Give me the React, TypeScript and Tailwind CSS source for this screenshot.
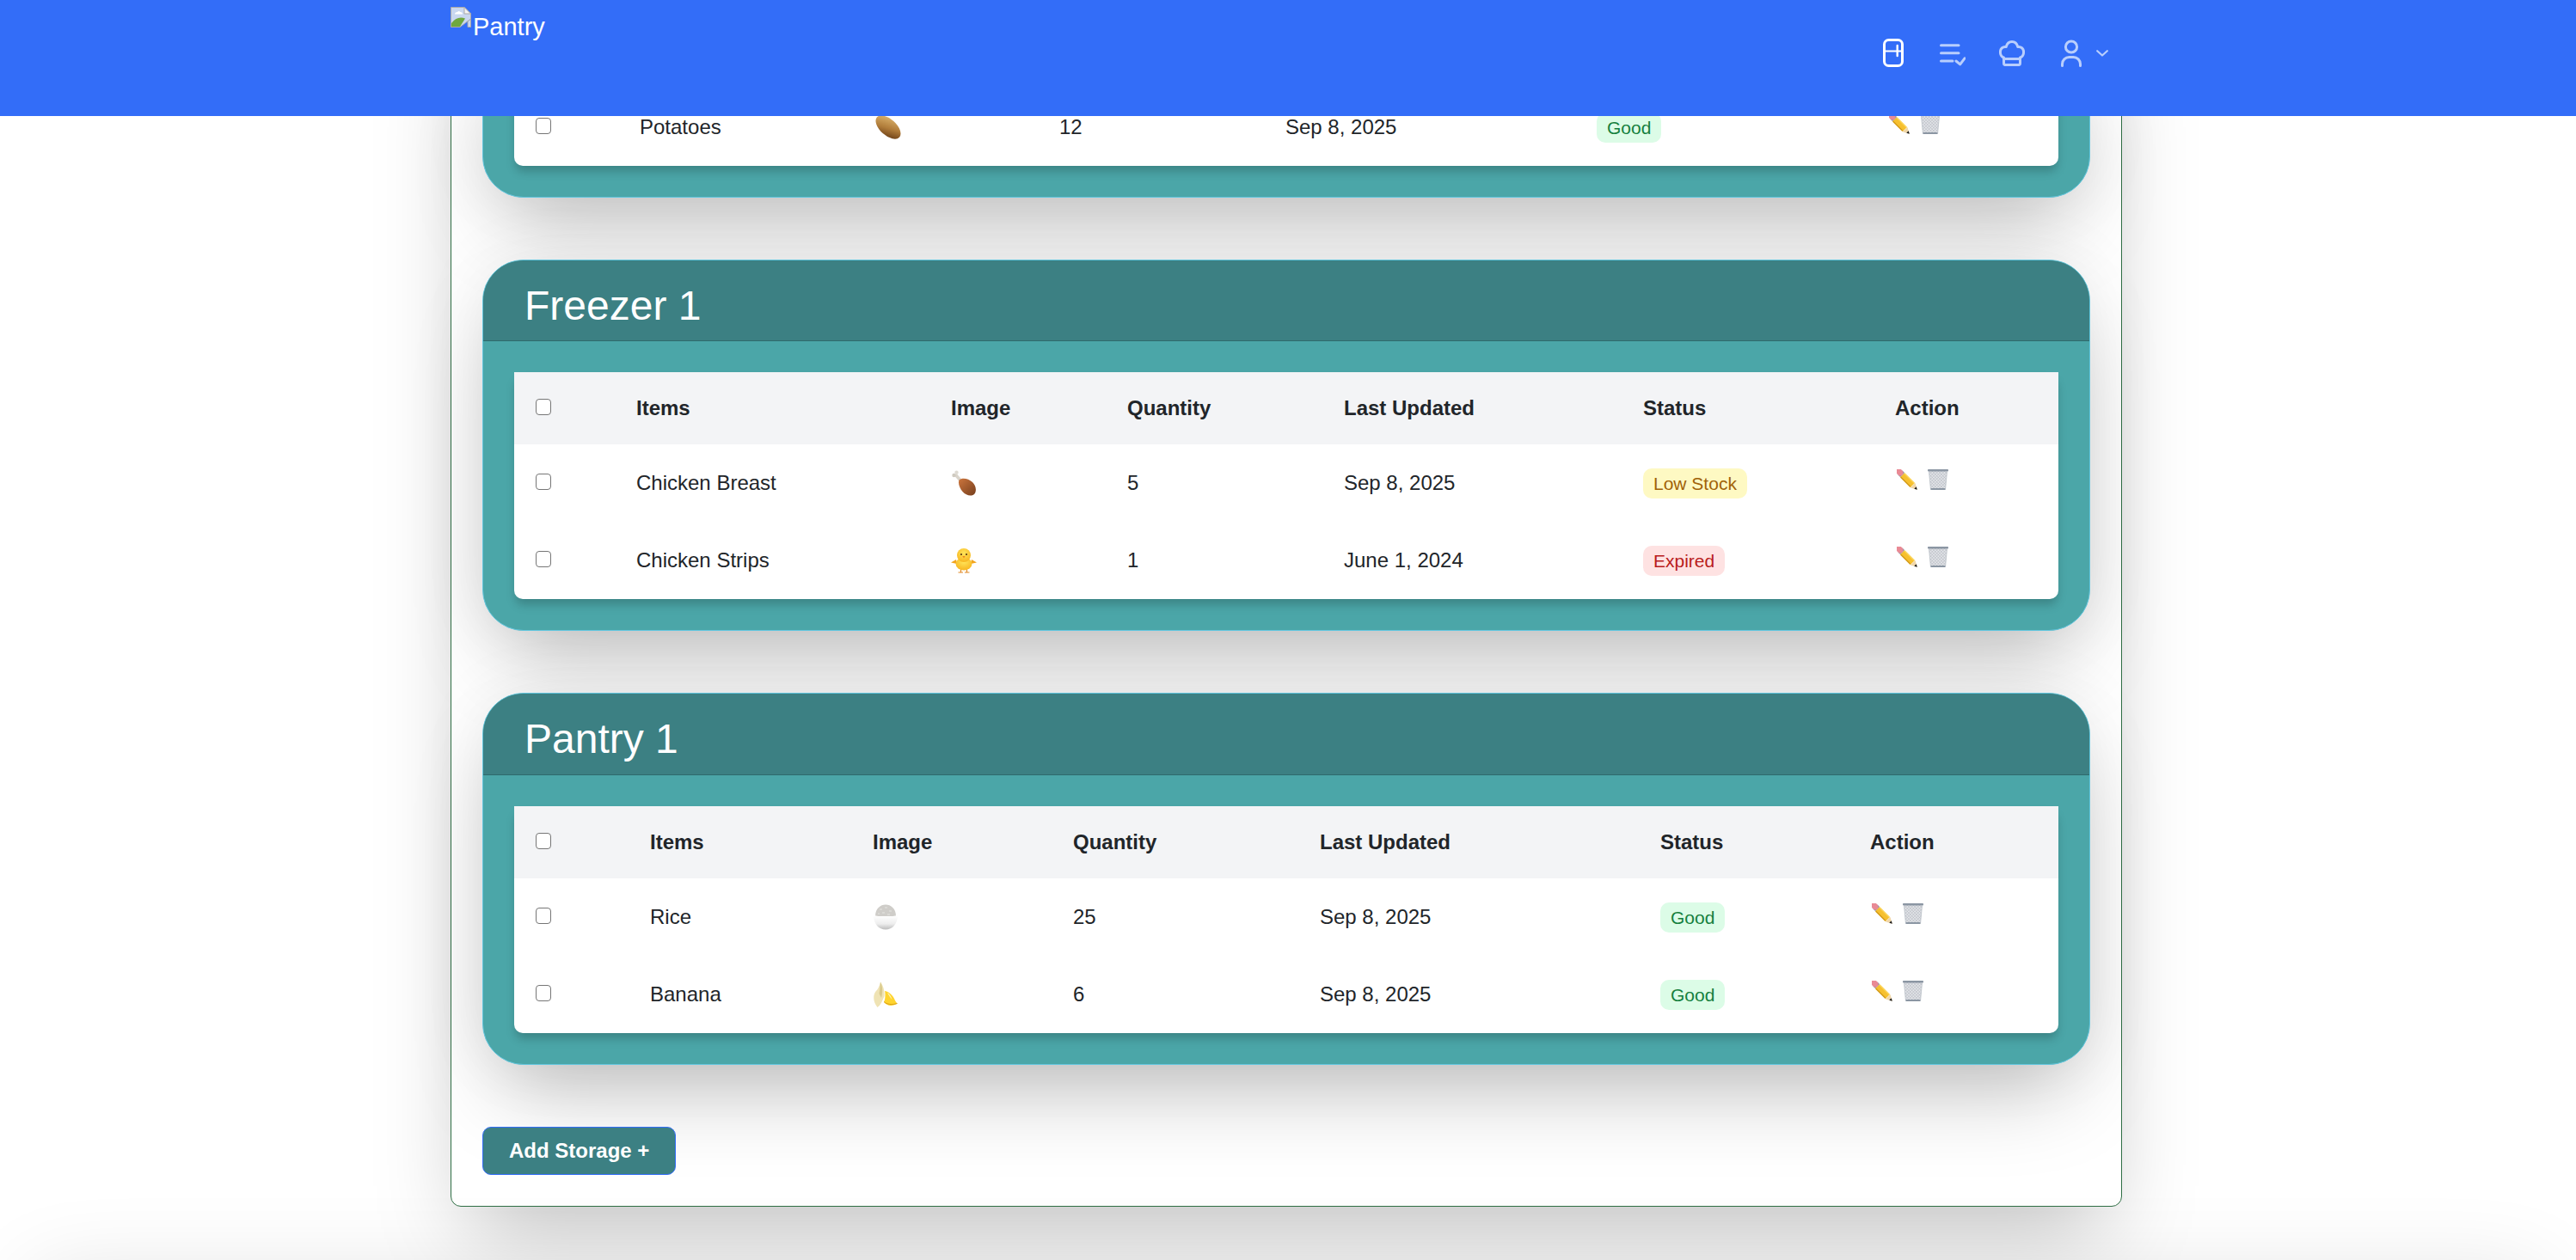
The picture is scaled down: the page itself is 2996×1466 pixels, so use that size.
const font = "font-['Liberation_Sans',Arial,sans-serif]"

function Fridge() {
  return (
    <svg width="24" height="33" viewBox="0 0 24 33" fill="none" stroke="white" strokeLinecap="round">
      <rect x="1.5" y="1.5" width="21" height="30" rx="5" strokeWidth="3" />
      <path d="M2 14.5H22" strokeWidth="2" />
      <path d="M16.7 8V20" strokeWidth="2.4" />
    </svg>
  )
}

function ListCheck() {
  return (
    <svg width="30" height="27" viewBox="0 0 30 27" fill="none" stroke="#b8cefd" strokeWidth="3" strokeLinecap="round" strokeLinejoin="round">
      <path d="M1.5 2.7H22" />
      <path d="M1.5 11.7H22" />
      <path d="M1.5 21H15" />
      <path d="M19 21L23.7 24.8L29 17.8" />
    </svg>
  )
}

function ChefHat() {
  return (
    <svg width="30" height="30" viewBox="0 0 30 30" fill="none" stroke="#b8cefd" strokeWidth="3" strokeLinejoin="round">
      <path d="M5.5 20C2.5 19 1.4 16 1.4 13.4C1.4 9.4 4.6 7 8.2 7.6C9.2 3.6 12 1.5 15 1.5C18 1.5 20.8 3.6 21.8 7.6C25.4 7 28.6 9.4 28.6 13.4C28.6 16 27.5 19 24.5 20V26.5Q24.5 28.6 22.4 28.6H7.6Q5.5 28.6 5.5 26.5Z" />
      <path d="M5.5 21.5H24.5" />
    </svg>
  )
}

function User() {
  return (
    <svg width="24" height="32" viewBox="0 0 24 32" fill="none" stroke="#b8cefd" strokeWidth="3" strokeLinecap="round">
      <circle cx="12" cy="8.5" r="6.6" />
      <path d="M1.5 30.5V28.500A8 8 0 0 1 9.500 20.500H14.500A8 8 0 0 1 22.500 28.500V30.500" />
    </svg>
  )
}

function Chevron() {
  return (
    <svg width="14" height="8" viewBox="0 0 14 8" fill="none" stroke="#b8cefd" strokeWidth="2.2" strokeLinecap="round" strokeLinejoin="round">
      <path d="M1.2 1.2L7 6.500L12.800 1.200" />
    </svg>
  )
}

function BrokenImage() {
  return (
    <svg width="24" height="24" viewBox="0 0 24 24" className="mt-[8px] shrink-0">
      <path d="M0.500 0.500H16L23.500 8V14L11 23.500H0.500Z" fill="#c9d7f0" stroke="#a9a9a9" />
      <path d="M16 0.500V8H23.500Z" fill="#f4f4f4" stroke="#a9a9a9" />
      <path d="M5 8.500Q5 6 8 6Q9.500 4 11.500 6Q14 6 14 8.500Z" fill="#ffffff" />
      <path d="M1 23V19Q8 10 17 13.500L11 23Z" fill="#6fa83f" />
      <path d="M20 17L23.500 14V23.500H20Z" fill="#c9d7f0" stroke="#a9a9a9" />
    </svg>
  )
}

function Potato() {
  return (
    <svg width="30" height="30" viewBox="0 0 30 30">
      <defs>
        <linearGradient id="potato" x1="0.15" y1="0.1" x2="0.85" y2="0.9">
          <stop offset="0" stopColor="#d9b06a" />
          <stop offset="0.55" stopColor="#b07c3a" />
          <stop offset="1" stopColor="#6f4218" />
        </linearGradient>
      </defs>
      <ellipse cx="15" cy="15" rx="17.500" ry="9.500" transform="rotate(42 15 15)" fill="url(#potato)" />
    </svg>
  )
}

function Drumstick() {
  return (
    <svg width="30" height="30" viewBox="0 0 30 30">
      <defs>
        <linearGradient id="meat" x1="0.1" y1="0.1" x2="0.9" y2="0.9">
          <stop offset="0" stopColor="#c4703a" />
          <stop offset="1" stopColor="#7f4420" />
        </linearGradient>
      </defs>
      <path d="M5 5L12 13" stroke="#d9d4cb" strokeWidth="3.500" />
      <circle cx="3.500" cy="6" r="2.200" fill="#cfcac0" />
      <circle cx="6.500" cy="2.800" r="2.200" fill="#dedad2" />
      <path d="M9.500 11.500C13 8.500 20 9.500 25 14C29.500 18.500 30 25 27 28C23.500 31 17.500 29.500 13.500 25C10 21 8 15 9.500 11.500Z" fill="url(#meat)" />
    </svg>
  )
}

function Chick() {
  return (
    <svg width="30" height="30" viewBox="0 0 30 30">
      <defs>
        <radialGradient id="chick" cx="0.5" cy="0.35" r="0.7">
          <stop offset="0" stopColor="#ffe55a" />
          <stop offset="1" stopColor="#f7b21c" />
        </radialGradient>
      </defs>
      <path d="M6 14L0 17.500L7 19Z" fill="#f2a51f" />
      <path d="M24 14L30 17.500L23 19Z" fill="#f2a51f" />
      <ellipse cx="15" cy="19" rx="9.500" ry="7.500" fill="url(#chick)" />
      <circle cx="15" cy="9" r="8" fill="url(#chick)" />
      <circle cx="12" cy="8" r="1" fill="#4a2c10" />
      <circle cx="18" cy="8" r="1" fill="#4a2c10" />
      <path d="M13.300 10H16.700L15 12.500Z" fill="#ee8a1a" />
      <path d="M11.500 26V28.500M18.500 26V28.500M8.500 29H14M16 29H21.500" stroke="#e28a25" strokeWidth="1.200" />
    </svg>
  )
}

function Rice() {
  return (
    <svg width="30" height="30" viewBox="0 0 30 30">
      <defs>
        <linearGradient id="bowl" x1="0" y1="0" x2="0" y2="1">
          <stop offset="0" stopColor="#ffffff" />
          <stop offset="0.6" stopColor="#eeeeee" />
          <stop offset="1" stopColor="#bcbcbc" />
        </linearGradient>
      </defs>
      <path d="M3 14C3 5 9 0.500 15 0.500C21 0.500 27 5 27 14Z" fill="#cfcdc9" />
      <path d="M8 6H11M14 4H17M19 8H22M11 10H14M6 11H8M17 12H20" stroke="#e6e5e1" strokeWidth="1.200" />
      <path d="M1 13Q15 16.500 29 13C29 23 23 29.500 15 29.500C7 29.500 1 23 1 13Z" fill="url(#bowl)" />
    </svg>
  )
}

function Banana() {
  return (
    <svg width="30" height="30" viewBox="0 0 30 30">
      <path d="M9 0.500C12.500 5 14 11 13.500 17C11 23 9 28 5.500 30C0.500 24 0 16 3.500 11.500C6.500 8.500 8 5 9 0.500Z" fill="#efe3b4" />
      <path d="M9 0.500C11.500 6 12 12 10 19L7.500 14C8.500 9 8.500 5 9 0.500Z" fill="#d9c98c" />
      <path d="M14 11C17 11 23 14.500 26 22C27 24 28 25 28.500 25.500C24 29 16 29 13 23.500C14.500 22 15 15 14 11Z" fill="#ffd42e" />
      <path d="M17 13C19.500 14 21.500 17 22.500 21C20 18.500 18.500 15.500 17 13Z" fill="#fff3b0" />
      <path d="M13 23.500C16 26.500 22 27.500 28.500 25.500" stroke="#d99d14" strokeWidth="1" fill="none" />
    </svg>
  )
}

function Pencil() {
  return (
    <svg width="24" height="24" viewBox="0 0 24 24">
      <path d="M6.500 6.500L18.500 18.500" stroke="#f6c02f" strokeWidth="6.500" />
      <path d="M9 4.800L20.500 16.300" stroke="#fbd55b" strokeWidth="1.500" />
      <path d="M4.500 9L16 20.500" stroke="#d49a17" strokeWidth="1.500" />
      <path d="M4 4L6.500 6.500" stroke="#7f8ea3" strokeWidth="7" />
      <path d="M1.800 1.800L4 4" stroke="#e98a95" strokeWidth="7" strokeLinecap="round" />
      <path d="M21.500 16L23.800 23.800L16 21.500Z" fill="#f0d6a8" />
      <path d="M22.700 20.300L23.800 23.800L20.300 22.700Z" fill="#1a1a1a" />
    </svg>
  )
}

function Trash() {
  return (
    <svg width="24" height="24" viewBox="0 0 24 24">
      <defs>
        <pattern id="mesh" width="2.500" height="2.500" patternUnits="userSpaceOnUse" patternTransform="rotate(45)">
          <rect width="2.500" height="2.500" fill="#e4e6ea" />
          <path d="M0 0H2.500M0 0V2.500" stroke="#a8adb5" strokeWidth="0.800" />
        </pattern>
      </defs>
      <path d="M1.500 2H22.500L20.500 24H3.500Z" fill="url(#mesh)" />
      <rect x="0" y="0" width="24" height="2.500" rx="0.800" fill="#8b96a3" />
      <path d="M3.200 22H20.800L20.500 24H3.500Z" fill="#8b96a3" />
      <path d="M1.500 2.500L3.500 24M22.500 2.500L20.500 24" stroke="#b9bfc7" strokeWidth="0.800" />
    </svg>
  )
}

const badgeStyles = {
  Good: 'bg-[#dcfce7] text-[#15803d]',
  'Low Stock': 'bg-[#fef9c3] text-[#a16207]',
  Expired: 'bg-[#fee2e2] text-[#b91c1c]',
}

type Row = {
  name: string
  icon: React.ReactNode
  qty: string
  date: string
  status: keyof typeof badgeStyles
}

function Check() {
  return (
    <input
      type="checkbox"
      className="mb-[4px] ml-px block h-[19px] w-[18px] appearance-none rounded-[4px] border-[1.5px] border-[#767676] bg-white"
    />
  )
}

function Actions() {
  return (
    <div className="mb-[8px] ml-[2px] flex gap-3">
      <Pencil />
      <Trash />
    </div>
  )
}

function StorageCard({ title, headerH, cols, head = true, rows }: { title?: string; headerH?: string; cols: string[]; head?: boolean; rows: Row[] }) {
  return (
    <section className="rounded-[48px] border border-[#62c6de] bg-[#4ba6a8] shadow-[0_50px_100px_-24px_rgba(0,0,0,0.25),0_0_80px_rgba(0,0,0,0.07)]">
      {title && (
        <div className={`flex items-center rounded-t-[47px] border-b border-[#2f6a6c] bg-[#3c8083] pl-12 pt-[12px] text-[48px] text-white ${headerH}`}>
          {title}
        </div>
      )}
      <div className="p-9">
        <div className="rounded-[10px] bg-white text-[24px] text-[#212529] shadow-[0_8px_12px_-2px_rgba(0,0,0,0.22)]">
          <table className="w-full table-fixed border-collapse">
            <colgroup>
              {cols.map((c, i) => (
                <col key={i} className={c} />
              ))}
            </colgroup>
            {head && (
              <thead>
                <tr className="h-[84px] bg-[#f3f4f6] text-left font-bold">
                  <th className="pl-6"><Check /></th>
                  <th className="pl-6">Items</th>
                  <th className="pl-6">Image</th>
                  <th className="pl-6">Quantity</th>
                  <th className="pl-6">Last Updated</th>
                  <th className="pl-6">Status</th>
                  <th className="pl-6">Action</th>
                </tr>
              </thead>
            )}
            <tbody>
              {rows.map((r) => (
                <tr key={r.name} className="h-[90px]">
                  <td className="pl-6"><Check /></td>
                  <td className="pl-6">{r.name}</td>
                  <td className="pl-6"><div className="flex">{r.icon}</div></td>
                  <td className="pl-6">{r.qty}</td>
                  <td className="pl-6">{r.date}</td>
                  <td className="pl-6">
                    <span className={`inline-block rounded-[10px] px-3 text-[21px] leading-[35px] ${badgeStyles[r.status]}`}>
                      {r.status}
                    </span>
                  </td>
                  <td className="pl-6"><Actions /></td>
                </tr>
              ))}
            </tbody>
          </table>
        </div>
      </div>
    </section>
  )
}

export default function App() {
  return (
    <div className={`${font} h-[1466px] overflow-hidden bg-white`}>
      <div className="h-[1483px]">
        <header className="relative z-10 h-[135px] bg-[#336df8] text-white">
          <div className="ml-[524px] flex w-[1944px]">
            <BrokenImage />
            <span className="ml-[2px] mt-[15px] text-[29px] leading-[33px]">Pantry</span>
            <nav className="ml-auto mr-[16px] mt-[45px] flex items-start">
              <Fridge />
              <div className="ml-[42px] mt-[5px]"><ListCheck /></div>
              <div className="ml-[39px] mt-[2px]"><ChefHat /></div>
              <div className="ml-[42px] mt-[1px]"><User /></div>
              <div className="ml-[17px] mt-[13px]"><Chevron /></div>
            </nav>
          </div>
        </header>

        <main className="-mt-[135px] ml-[524px] flex w-[1944px] flex-col gap-[72px] rounded-b-[12px] border border-[#2f6f45] bg-white px-9 pb-9 pt-[65px] shadow-[0_50px_100px_-24px_rgba(0,0,0,0.25)]">
          <StorageCard
            head={false}
            cols={['w-[122px]', 'w-[274px]', 'w-[214px]', 'w-[263px]', 'w-[362px]', 'w-[338px]', 'w-[223px]']}
            rows={[{ name: 'Potatoes', icon: <Potato />, qty: '12', date: 'Sep 8, 2025', status: 'Good' }]}
          />
          <StorageCard
            title="Freezer 1"
            headerH="h-[94px]"
            cols={['w-[118px]', 'w-[366px]', 'w-[205px]', 'w-[252px]', 'w-[348px]', 'w-[293px]', 'w-[214px]']}
            rows={[
              { name: 'Chicken Breast', icon: <Drumstick />, qty: '5', date: 'Sep 8, 2025', status: 'Low Stock' },
              { name: 'Chicken Strips', icon: <Chick />, qty: '1', date: 'June 1, 2024', status: 'Expired' },
            ]}
          />
          <StorageCard
            title="Pantry 1"
            headerH="h-[95px]"
            cols={['w-[134px]', 'w-[259px]', 'w-[233px]', 'w-[287px]', 'w-[396px]', 'w-[244px]', 'w-[243px]']}
            rows={[
              { name: 'Rice', icon: <Rice />, qty: '25', date: 'Sep 8, 2025', status: 'Good' },
              { name: 'Banana', icon: <Banana />, qty: '6', date: 'Sep 8, 2025', status: 'Good' },
            ]}
          />
          <div>
            <button className="h-[56px] rounded-[10px] border-[1.5px] border-[#336df8] bg-[#3c8083] px-[30px] text-[24px] font-bold text-white">
              Add Storage +
            </button>
          </div>
        </main>
      </div>
      <div className="mx-10 h-[100px] shadow-[0_0_100px_rgba(0,0,0,0.12)]" />
    </div>
  )
}
